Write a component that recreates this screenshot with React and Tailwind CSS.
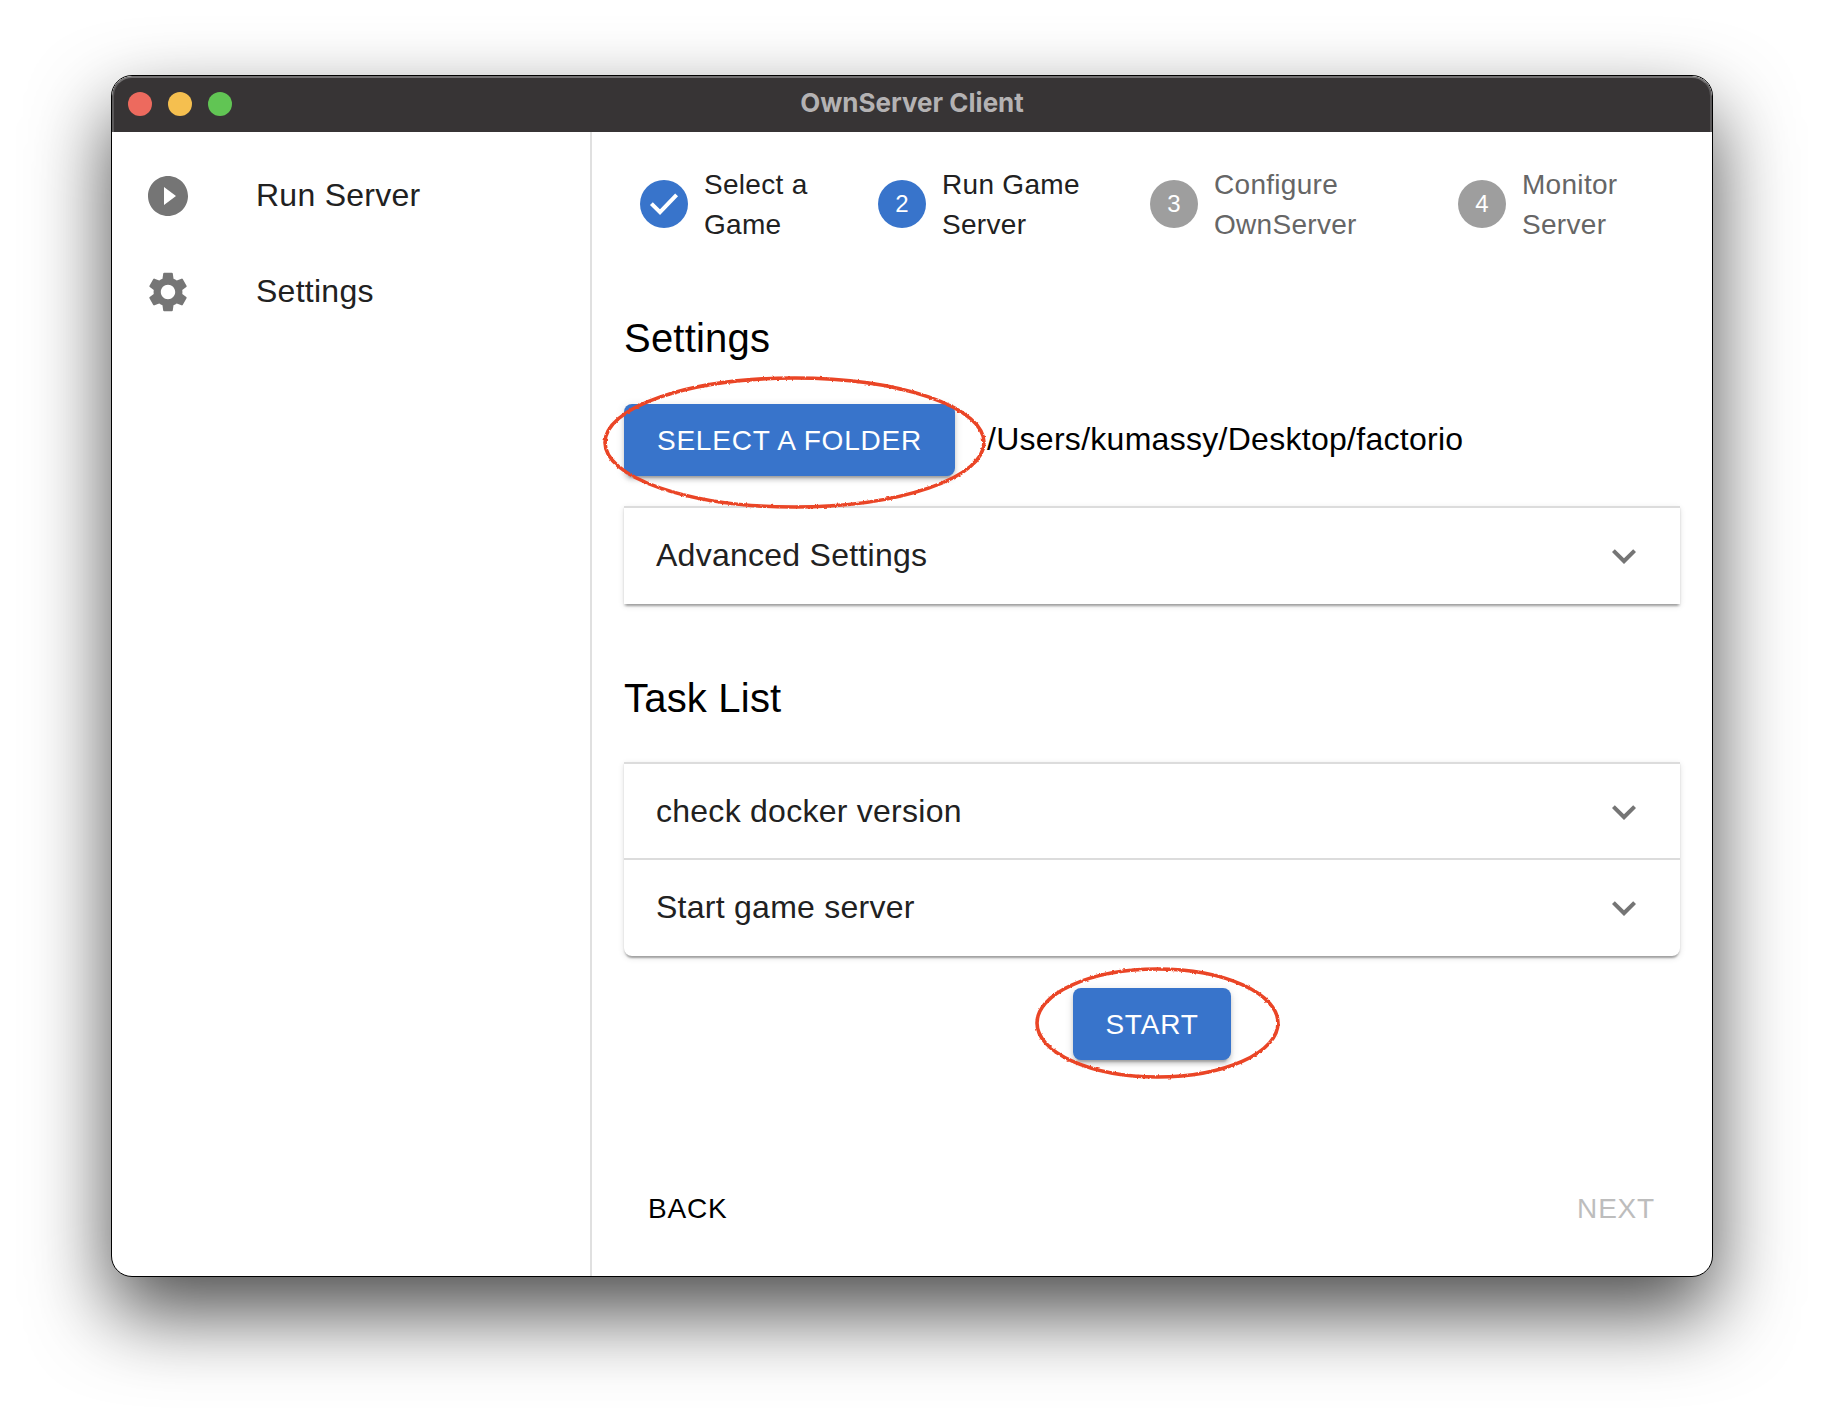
import { MdPlayCircleFilled, MdSettings, MdExpandMore } from "react-icons/md";

function Step({ n, label, done, active, className = "" }) {
  const on = done || active;
  return (
    <div className={`flex shrink-0 items-center gap-4 ${className}`}>
      <span className={`flex size-12 shrink-0 items-center justify-center rounded-full text-2xl text-white ${on ? "bg-[#3874cb]" : "bg-[#9e9e9e]"}`}>
        {done ? (
          <svg viewBox="0 0 48 48" className="size-12">
            <path d="M11.4 23.6 20 32.2 36.6 14.8" fill="none" stroke="#fff" strokeWidth="4" />
          </svg>
        ) : (
          <span className="leading-none">{n}</span>
        )}
      </span>
      <span className={`whitespace-pre pt-0.5 text-[28px] leading-10 tracking-[0.3px] ${on ? "text-[#212121]" : "text-[#666]"}`}>{label}</span>
    </div>
  );
}

function Row({ children, className = "", textClass = "pb-0.5" }) {
  return (
    <div className={`flex items-center justify-between px-8 ${className}`}>
      <span className={textClass}>{children}</span>
      <MdExpandMore className="size-12 text-[#757575]" />
    </div>
  );
}

function Button({ children, className }) {
  return (
    <button className={`relative flex h-[72px] items-center justify-center rounded-lg bg-[#3874cb] pt-0.5 text-[28px] tracking-[0.8px] text-white shadow-[0_6px_2px_-4px_rgba(0,0,0,0.2),0_4px_4px_0_rgba(0,0,0,0.14),0_2px_10px_0_rgba(0,0,0,0.12)] ${className}`}>
      {children}
    </button>
  );
}

function Ring({ id, rx, ry, className }) {
  const w = rx * 2 + 10;
  const h = ry * 2 + 10;
  return (
    <svg width={w} height={h} className={`pointer-events-none absolute max-w-none ${className}`}>
      <filter id={id}>
        <feTurbulence type="fractalNoise" baseFrequency="0.35" numOctaves="2" seed="4" />
        <feDisplacementMap in="SourceGraphic" scale="2.5" xChannelSelector="R" yChannelSelector="G" />
      </filter>
      <ellipse cx={w / 2} cy={h / 2} rx={rx} ry={ry} fill="none" stroke="#ea4425" strokeWidth="3.6" filter={`url(#${id})`} />
    </svg>
  );
}

const paper =
  "shadow-[0_4px_2px_-2px_rgba(0,0,0,0.2),0_2px_2px_0_rgba(0,0,0,0.14),0_2px_6px_0_rgba(0,0,0,0.12)]";

export default function App() {
  return (
    <div className="flex h-[1424px] w-[1824px] justify-center overflow-hidden bg-white pt-[75px] font-['Liberation_Sans',Arial,sans-serif] text-[32px] text-[#212121]">
      <div className="flex h-[1202px] w-[1602px] flex-col overflow-hidden rounded-[21px] border border-black bg-white shadow-[0_36px_80px_rgba(0,0,0,0.7)]">
        <header className="grid h-14 shrink-0 grid-cols-3 items-center rounded-t-[20px] border-x-2 border-t-2 border-x-[#5b595a] border-t-[#737172] bg-[#373435] px-3.5 pb-0.5">
          <div className="flex gap-4">
            <span className="size-6 rounded-full bg-[#ed6a5e]" />
            <span className="size-6 rounded-full bg-[#f5bf4f]" />
            <span className="size-6 rounded-full bg-[#61c554]" />
          </div>
          <h1 className="pb-0.5 text-center font-['Inter',sans-serif] text-[26px] leading-none font-bold text-[#b4b2b3]">OwnServer Client</h1>
        </header>
        <div className="flex min-h-0 grow">
          <nav className="w-[480px] shrink-0 border-r-2 border-[#e0e0e0] pt-4 tracking-[0.26px]">
            <div className="flex h-24 items-center gap-16 pl-8">
              <MdPlayCircleFilled className="size-12 text-[#757575]" />
              <span className="pb-0.5">Run Server</span>
            </div>
            <div className="flex h-24 items-center gap-16 pl-8">
              <MdSettings className="size-12 text-[#757575]" />
              <span className="pb-0.5">Settings</span>
            </div>
          </nav>
          <main className="flex grow flex-col px-8 pt-8">
            <div className="flex h-20 pl-4">
              <Step n={1} done label={"Select a\nGame"} className="w-[238px]" />
              <Step n={2} active label={"Run Game\nServer"} className="w-[272px]" />
              <Step n={3} label={"Configure\nOwnServer"} className="w-[308px]" />
              <Step n={4} label={"Monitor\nServer"} />
            </div>
            <h2 className="mt-[62px] text-[40px] leading-[64px] tracking-[0.2px] text-black">Settings</h2>
            <div className="relative mt-[34px] flex items-center gap-8">
              <Button className="w-[331px]">SELECT A FOLDER</Button>
              <span className="pb-0.5 tracking-[0.28px] text-black">/Users/kumassy/Desktop/factorio</span>
              <Ring id="rough-wide" rx={189.5} ry={64.5} className="-top-[31px] -left-[24px]" />
            </div>
            <div className={`mt-[30px] border-t-2 border-[#dcdcdc] tracking-[0.26px] ${paper}`}>
              <Row className="h-24">Advanced Settings</Row>
            </div>
            <h2 className="mt-[62px] text-[40px] leading-[64px] tracking-[0.2px] text-black">Task List</h2>
            <div className={`mt-8 rounded-b-lg border-t-2 border-[#dcdcdc] tracking-[0.26px] ${paper}`}>
              <Row className="h-24 border-b-2 border-[#dcdcdc] pt-px" textClass="pb-px">
                check docker version
              </Row>
              <Row className="h-24">Start game server</Row>
            </div>
            <div className="relative mt-8 flex justify-center">
              <Button className="w-[158px]">START</Button>
              <Ring id="rough-small" rx={120.5} ry={54} className="-top-[24px] left-[408px]" />
            </div>
            <div className="mt-28 flex h-[72px] items-center justify-between px-6 pt-0.5 text-[28px] tracking-[0.8px]">
              <button className="text-black">BACK</button>
              <button className="pr-px text-[#bdbdbd]">NEXT</button>
            </div>
          </main>
        </div>
      </div>
    </div>
  );
}
